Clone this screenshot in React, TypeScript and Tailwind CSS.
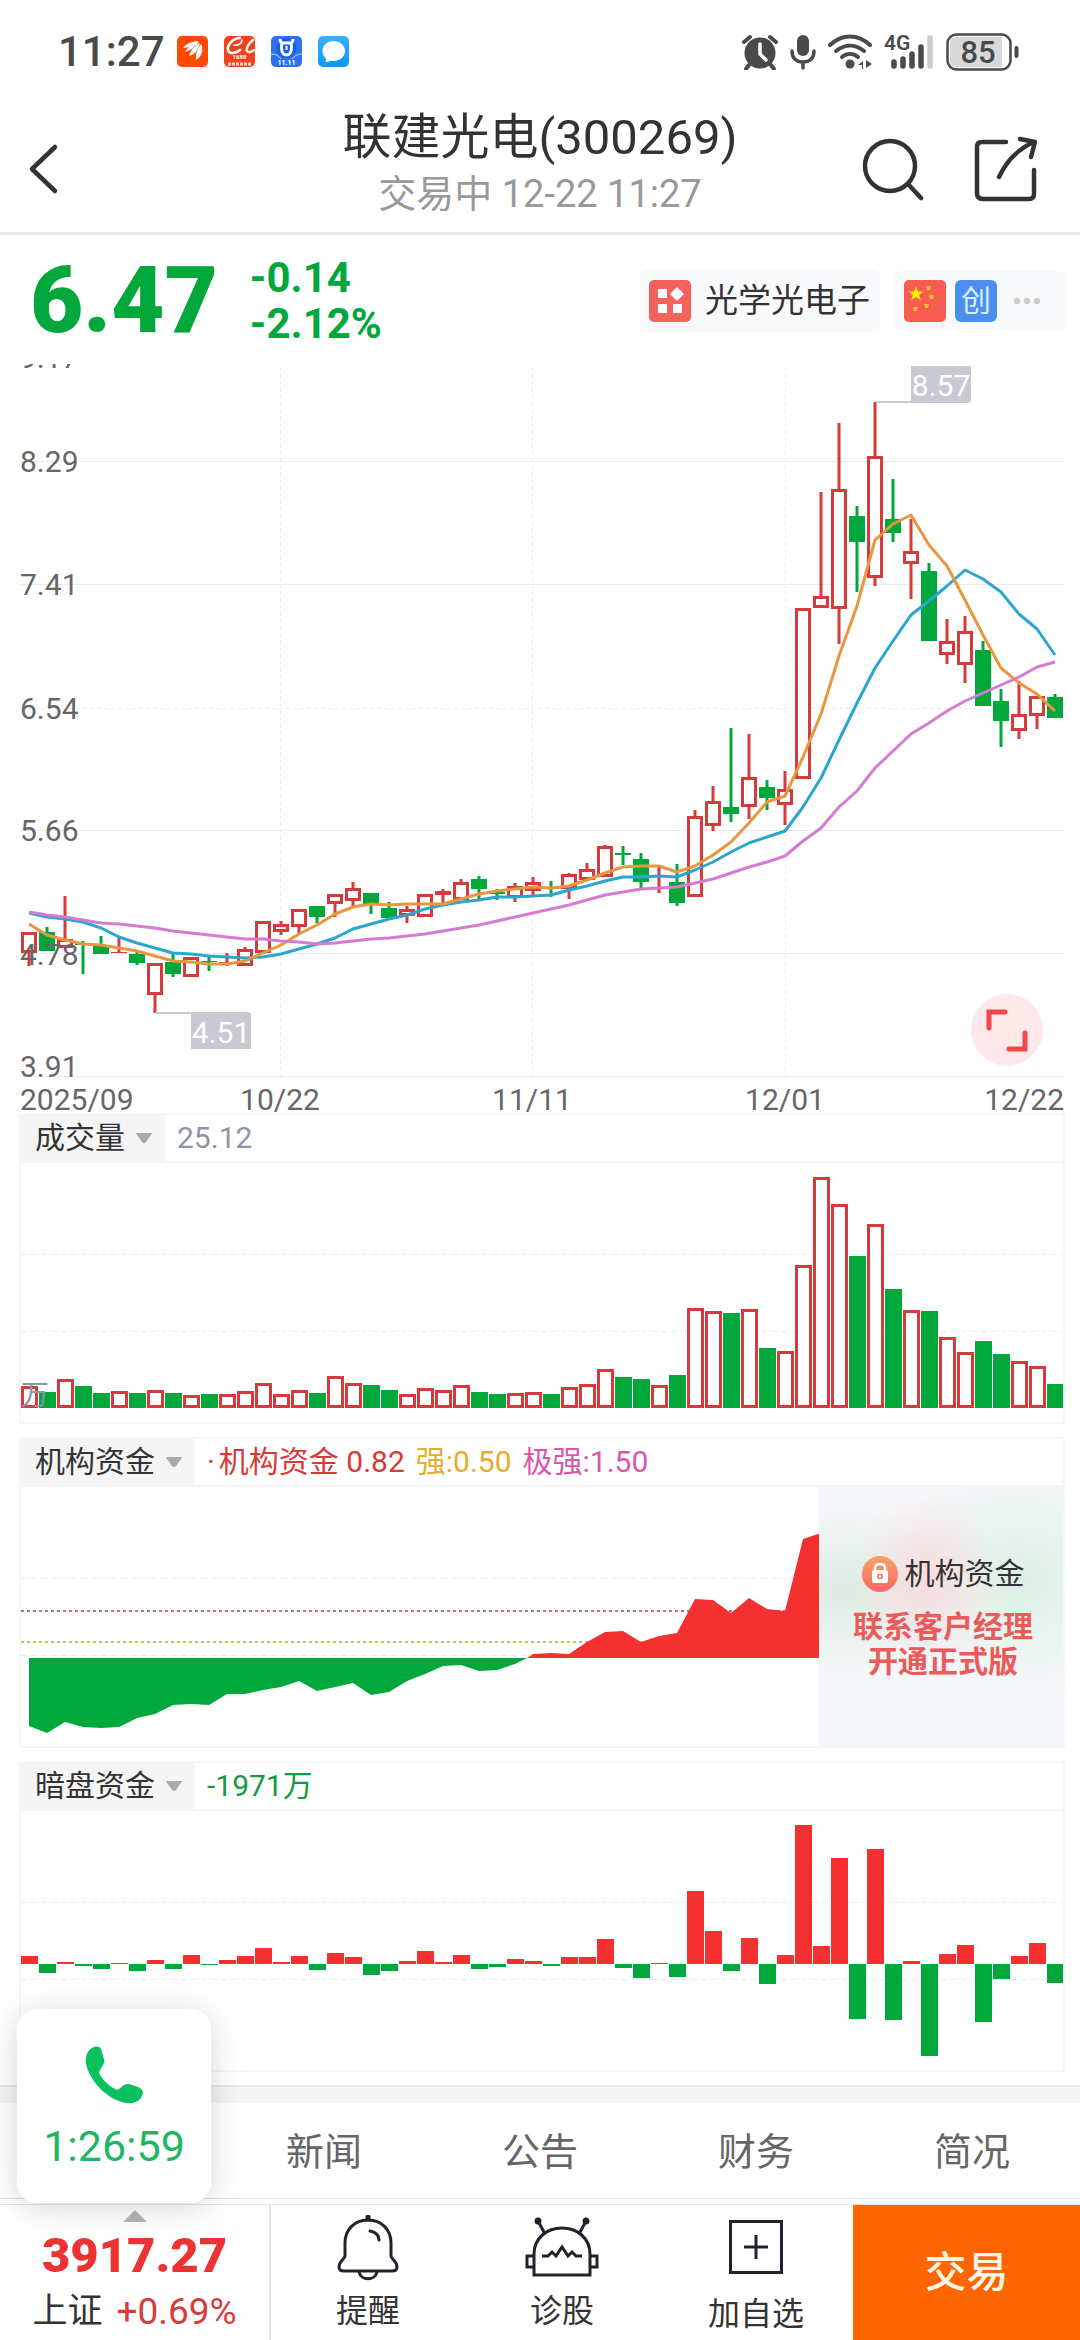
import React from "react";

const RED = "#d63b3b";
const GREEN = "#00a83c";

// [up, high, open/close top, open/close bottom, low] in chart coordinates
type Candle = [number, number, number, number, number];

const candles: Candle[] = [
  [1, 932, 932, 953, 966], [0, 927, 932, 951, 951], [1, 896, 939, 948, 948], [0, 941, 944, 945, 974],
  [0, 936, 946, 954, 954], [1, 937, 952, 953, 953], [0, 952, 954, 963, 965], [1, 963, 963, 995, 1013],
  [0, 954, 962, 974, 977], [1, 957, 957, 977, 977], [0, 957, 961, 962, 971], [1, 953, 962, 963, 966],
  [1, 947, 949, 966, 966], [1, 921, 921, 953, 954], [1, 921, 924, 932, 935], [1, 909, 909, 927, 933],
  [0, 906, 906, 917, 923], [1, 894, 894, 904, 917], [1, 882, 888, 901, 906], [0, 893, 893, 904, 914],
  [0, 902, 908, 918, 918], [1, 906, 909, 916, 923], [1, 894, 894, 917, 917], [1, 889, 891, 895, 904],
  [1, 879, 882, 900, 900], [0, 876, 879, 889, 899], [0, 889, 892, 894, 900], [1, 883, 886, 898, 902],
  [1, 877, 882, 891, 895], [0, 881, 888, 889, 897], [1, 873, 874, 889, 899], [1, 863, 869, 880, 880],
  [1, 845, 846, 877, 877], [0, 846, 853, 855, 865], [0, 853, 859, 882, 888], [1, 866, 887, 888, 893],
  [0, 864, 882, 903, 906], [1, 810, 816, 897, 897], [1, 786, 801, 826, 831], [0, 728, 807, 814, 822],
  [1, 734, 777, 807, 819], [0, 780, 787, 798, 810], [1, 771, 789, 805, 825], [1, 608, 608, 779, 779],
  [1, 492, 596, 608, 608], [1, 423, 489, 609, 644], [0, 506, 516, 542, 592], [1, 402, 456, 578, 586],
  [0, 479, 519, 533, 542], [1, 519, 551, 564, 599], [0, 563, 571, 641, 641], [1, 619, 641, 655, 664],
  [1, 616, 631, 665, 683], [0, 641, 650, 706, 706], [0, 689, 701, 721, 747], [1, 681, 714, 731, 739],
  [1, 696, 696, 716, 729], [0, 694, 697, 718, 718],
];

const ma5 = [
  924, 935, 940, 944, 945, 948, 951, 956, 961, 962, 964, 964, 961, 953, 945, 934, 925, 914, 907, 904,
  905, 904, 904, 904, 899, 894, 891, 889, 887, 888, 886, 880, 873, 867, 866, 866, 872, 866, 855, 842,
  823, 802, 796, 757, 714, 656, 606, 540, 524, 515, 545, 566, 600, 635, 668, 683, 694, 711,
];
const ma10 = [
  913, 917, 919, 922, 928, 937, 943, 948, 953, 954, 956, 957, 958, 957, 954, 949, 944, 938, 929, 924,
  919, 915, 909, 905, 902, 900, 897, 897, 896, 895, 890, 886, 881, 877, 877, 876, 877, 870, 862, 852,
  843, 837, 831, 807, 778, 740, 703, 668, 641, 615, 601, 586, 570, 579, 592, 614, 629, 655,
];
const ma20 = [
  912, 915, 917, 920, 923, 924, 926, 928, 931, 933, 935, 937, 939, 939, 941, 942, 944, 943, 941, 939,
  938, 936, 934, 931, 928, 925, 921, 917, 913, 909, 905, 900, 895, 892, 889, 888, 887, 883, 879, 873,
  867, 862, 856, 841, 828, 807, 791, 768, 751, 734, 723, 711, 701, 693, 685, 677, 667, 662,
];

const volumes = [
  22, 16, 29, 22, 15, 17, 15, 18, 15, 13, 14, 14, 17, 25, 14, 18, 15, 32, 25, 23,
  18, 14, 20, 18, 23, 16, 14, 15, 16, 14, 21, 24, 39, 31, 29, 23, 33, 100, 97, 95,
  99, 60, 57, 143, 231, 204, 152, 184, 119, 98, 97, 71, 56, 67, 54, 47, 42, 24,
];

const orgFunds = [
  -68, -75, -64, -69, -70, -69, -60, -56, -47, -46, -47, -36, -36, -32, -29, -23, -33, -29, -25, -37,
  -34, -23, -16, -8, -7, -13, -12, -6, 4, 5, 4, 16, 26, 27, 16, 22, 25, 59, 58, 45,
  60, 49, 47, 119, 125,
];

const darkFunds = [
  8, -9, 2, -2, -5, 1, -7, 4, -5, 9, -1, 4, 8, 16, 2, 8, -6, 11, 7, -11,
  -7, 3, 13, 2, 9, -5, -3, 5, 3, -2, 7, 7, 25, -4, -14, 1, -13, 73, 33, -7,
  26, -20, 9, 139, 18, 106, -55, 115, -56, 3, -92, 10, 19, -58, -15, 8, 21, -19,
];

const xAt = (i: number) => 29 + i * 18;
const toPoints = (values: number[]) => values.map((v, i) => `${xAt(i)},${v}`).join(" ");

const StatusBar = () => (
  <div className="flex h-[103px] items-center justify-between pl-[58px] pr-[60px] text-[#4a4a4a]">
    <div className="flex items-center gap-4">
      <span className="-mr-1 text-[42px] font-medium leading-none">11:27</span>
      {/* Feather app */}
      <svg width="31" height="31" viewBox="0 0 31 31">
        <rect width="31" height="31" rx="5" fill="#ff4800" />
        <g fill="#fff">
          <path d="M6 12C10 7 16 5 22 5c-2 2-5 3-7 5-3 1-6 2-9 2z" />
          <path d="M8 16c3-5 8-9 14-10-2 3-5 4-7 7-2 1-4 2-7 3z" />
          <path d="M12 20c2-6 6-11 11-13-1 4-3 6-4 9-2 2-4 3-7 4z" />
          <path d="M19 24c-1-6 2-12 5-16 3 6 1 12-5 16z" />
        </g>
      </svg>
      {/* 1688 app */}
      <svg width="31" height="31" viewBox="0 0 31 31">
        <rect width="31" height="31" rx="5" fill="#f2431a" />
        <g fill="none" stroke="#fff" strokeLinecap="round">
          <path d="M16 2C9 2 3 9 4 14c1 5 9 3 12 0" strokeWidth="2.6" />
          <path d="M10 9c4 1 8-2 8-5" strokeWidth="1.6" />
          <path d="M29 4c-4 3-7 8-6 11 1 2 5 1 7-1" strokeWidth="2.4" />
        </g>
        <text x="15.5" y="23" fontSize="6" fontWeight="700" textAnchor="middle" fill="#fff">1688</text>
        <path d="M4 28h23" stroke="#ffd9cc" strokeWidth="3" strokeDasharray="3 1" />
      </svg>
      {/* 11.11 app */}
      <svg width="31" height="31" viewBox="0 0 31 31">
        <rect width="31" height="31" rx="5" fill="#2f6ff0" />
        <circle cx="15.5" cy="12" r="10" fill="#1760e0" />
        <path d="M0 18c5 0 8 2 10 5M31 18c-5 0-8 2-10 5" stroke="#bcd4ff" fill="none" />
        <path d="M9 3c0 3 1 4 3 4h7c2 0 3-1 3-4M11 7c-1 4-1 12 4.500 12S21 11 20 7" fill="none" stroke="#fff" strokeWidth="3" />
        <path d="M15.500 10v4" stroke="#fff" strokeWidth="2" />
        <text x="15.5" y="29" fontSize="7" fontWeight="700" textAnchor="middle" fill="#fff">11.11</text>
      </svg>
      {/* Messages app */}
      <svg width="31" height="31" viewBox="0 0 31 31">
        <defs>
          <linearGradient id="msg" x1="0" y1="0" x2="0" y2="1">
            <stop offset="0" stopColor="#35b1ff" />
            <stop offset="1" stopColor="#0b97fb" />
          </linearGradient>
        </defs>
        <rect width="31" height="31" rx="5" fill="url(#msg)" />
        <path d="M15.500 5C9 5 4.500 9.500 4.500 15c0 3.500 1.500 6 3.500 7.500L7.500 26c2 0 4-.5 5.500-1.300C21 26 27 21 27 15c0-5.500-5-10-11.500-10z" fill="#fff" />
      </svg>
    </div>
    <div className="flex items-center gap-3">
      {/* Alarm */}
      <svg width="36" height="36" viewBox="0 0 36 36">
        <circle cx="18" cy="19" r="15.500" fill="#4a4a4a" />
        <path d="M2 8l6-5M34 8l-6-5M7 31l-3 4M29 31l3 4" stroke="#4a4a4a" strokeWidth="4" strokeLinecap="round" />
        <path d="M18 10v10l6 6" fill="none" stroke="#fff" strokeWidth="3.500" strokeLinecap="round" strokeLinejoin="round" />
      </svg>
      {/* Microphone */}
      <svg width="26" height="36" viewBox="0 0 26 36">
        <rect x="7" y="1" width="12" height="21" rx="6" fill="#4a4a4a" />
        <path d="M2 17c0 8 5 11 11 11s11-3 11-11M13 28v6" fill="none" stroke="#4a4a4a" strokeWidth="3.500" strokeLinecap="round" />
      </svg>
      {/* Wifi */}
      <svg width="44" height="36" viewBox="0 0 44 36">
        <g fill="none" stroke="#4a4a4a" strokeWidth="4" strokeLinecap="round">
          <path d="M2 11C14-.5 30-.5 42 11" />
          <path d="M8 17c9-7 19-7 28 0" />
          <path d="M14 23c5-4 11-4 16 0" />
        </g>
        <circle cx="22" cy="30" r="4.500" fill="#4a4a4a" />
        <path d="M30 31l5-4v8h-1v-4zM38 26v8l6-4z" fill="#4a4a4a" />
      </svg>
      {/* Mobile signal */}
      <svg width="50" height="36" viewBox="0 0 50 36" className="overflow-visible">
        <text x="0" y="16" fontSize="21" fontWeight="600" fill="#4a4a4a">4G</text>
        <g strokeWidth="5.500" strokeLinecap="round" stroke="#4a4a4a">
          <path d="M10 28v4M19 25v7M28 20v12M37 13v19" />
          <path d="M46 4v28" stroke="#cacaca" />
        </g>
      </svg>
      {/* Battery */}
      <svg width="74" height="38" viewBox="0 0 74 38">
        <rect x="1.500" y="1.500" width="63" height="35" rx="9" fill="#fff" stroke="#4a4a4a" strokeWidth="2.500" />
        <path d="M10 4h46v30H10q-6 0-6-6V10q0-6 6-6z" fill="#d9d9d9" />
        <path d="M70.500 15v8" stroke="#4a4a4a" strokeWidth="4" strokeLinecap="round" />
        <text x="32" y="30" fontSize="31" fontWeight="500" textAnchor="middle" fill="#4a4a4a">85</text>
      </svg>
    </div>
  </div>
);

const Header = () => (
  <header className="grid h-[132px] grid-cols-[1fr_auto_1fr] items-center border-b-[3px] border-[#e7e7e7]">
    <button aria-label="返回" className="w-fit pl-[28px] pt-[2px]">
      <svg width="32" height="52" viewBox="0 0 32 52" fill="none" stroke="#333" strokeWidth="4.500" strokeLinecap="round" strokeLinejoin="round">
        <path d="M27 4L4 26l23 22" />
      </svg>
    </button>
    <div className="pb-1 text-center">
      <h1 className="text-[49px] leading-[56px] text-[#333]">联建光电(300269)</h1>
      <p className="text-[38px] leading-[56px] text-[#999]">交易中 12-22 11:27</p>
    </div>
    <div className="flex items-center justify-end gap-[50px] pr-[42px] pt-[2px]">
      <button aria-label="搜索">
        <svg width="62" height="64" viewBox="0 0 62 64" fill="none" stroke="#333" strokeWidth="4.500" strokeLinecap="round">
          <circle cx="28" cy="29" r="25" />
          <path d="M46 47l13 14" />
        </svg>
      </button>
      <button aria-label="分享">
        <svg width="64" height="66" viewBox="0 0 64 66" fill="none" stroke="#333" strokeWidth="4.500" strokeLinecap="round" strokeLinejoin="round">
          <path d="M32 6H8q-5 0-5 5v46q0 6 6 6h46q5 0 5-5V34" />
          <path d="M25 41C32 26 44 13 60 6" />
          <path d="M46 3l15 3-4 15" />
        </svg>
      </button>
    </div>
  </header>
);

const PriceRow = () => (
  <section className="flex h-[129px] items-center justify-between pl-[30px] pr-[15px] pt-[2px]">
    <div className="flex items-center gap-8 text-[#00a83c]">
      <span className="text-[92px] font-black leading-none">6.47</span>
      <div className="text-[42px] font-bold leading-[46px]">
        <p>-0.14</p>
        <p>-2.12%</p>
      </div>
    </div>
    <div className="flex items-center gap-[15px]">
      <a href="#sector" className="flex h-[62px] items-center gap-[14px] rounded-md bg-[#f8f9fb] pl-[9px] pr-[10px] text-[33px] text-[#333]">
        <svg width="42" height="42" viewBox="0 0 42 42">
          <rect width="42" height="42" rx="5" fill="#f5625d" />
          <g fill="#fff">
            <rect x="9" y="9" width="9" height="9" />
            <rect x="9" y="24" width="9" height="9" />
            <rect x="24" y="24" width="9" height="9" />
            <path d="M28 7l7 7-7 7-7-7z" />
          </g>
        </svg>
        光学光电子
      </a>
      <button aria-label="更多标签" className="flex h-[60px] items-center gap-[9px] rounded-md bg-[#f8f9fb] pl-[9px] pr-[24px]">
        <svg width="42" height="42" viewBox="0 0 42 42">
          <rect width="42" height="42" rx="5" fill="#f85c50" />
          <path d="M12 6.500l2 5h5.500l-4.400 3.400 1.700 5.300L12 17l-4.800 3.200 1.700-5.300L4.500 11.500H10z" fill="#ffee00" />
          <g fill="#f9c02e">
            <path d="M22 6l5 0-1 4h-3zM25 15l5 0-1 4h-3zM20 24l5 0-1 4h-3zM9 27h5l-1 4h-3z" />
          </g>
        </svg>
        <span className="flex h-[42px] w-[42px] items-center justify-center rounded-md bg-[#4a8ef0] text-[30px] leading-none text-[#d9efff]">创</span>
        <svg width="28" height="8" viewBox="0 0 28 8" className="ml-[7px]" fill="#ccc">
          <circle cx="4" cy="4" r="3.200" />
          <circle cx="14" cy="4" r="3.200" />
          <circle cx="24" cy="4" r="3.200" />
        </svg>
      </button>
    </div>
  </section>
);

const PriceChart = () => (
  <section className="relative">
    <svg viewBox="0 364 1080 749" className="block w-full">
      {/* Grid */}
      <g stroke="#ececec" strokeWidth="1">
        {[461.5, 584.5, 830.5, 953.5, 1076.5].map((y) => (
          <path key={y} d={`M20 ${y}H1064`} />
        ))}
        <path d="M20 708.500H1064" strokeDasharray="4 3" />
        {[280.5, 532.5, 785.5].map((x) => (
          <path key={x} d={`M${x} 367V1076`} strokeDasharray="4 3" />
        ))}
      </g>
      {candles.map(([up, high, top, bottom, low], i) => {
        const x = xAt(i);
        const color = up ? RED : GREEN;
        return (
          <g key={i}>
            {high < top && <rect x={x - 1.5} y={high} width="3" height={top - high} fill={color} />}
            {low > bottom && <rect x={x - 1.5} y={bottom} width="3" height={low - bottom} fill={color} />}
            {up && bottom - top > 5 ? (
              <rect x={x - 6.5} y={top + 1.5} width="13" height={bottom - top - 3} fill="#fff" stroke={color} strokeWidth="3" />
            ) : (
              <rect x={x - 8} y={top} width="16" height={bottom - top} fill={color} />
            )}
          </g>
        );
      })}
      <g fill="none" strokeWidth="3" strokeLinejoin="round">
        <polyline points={toPoints(ma10)} stroke="#2ba6d0" />
        <polyline points={toPoints(ma5)} stroke="#e9963e" />
        <polyline points={toPoints(ma20)} stroke="#d67bd2" />
      </g>
      {/* High and low marks */}
      <g fill="#c9c9d2">
        <rect x="876" y="401" width="93" height="2" />
        <rect x="911" y="366" width="60" height="36" />
        <rect x="155" y="1012" width="94" height="2" />
        <rect x="191" y="1013" width="60" height="36" />
      </g>
      <g fill="#fff" fontSize="30" textAnchor="middle">
        <text x="941" y="396">8.57</text>
        <text x="221" y="1043">4.51</text>
      </g>
      <g fill="#666" fontSize="30">
        <text x="20" y="368">9.17</text>
        <text x="20" y="472">8.29</text>
        <text x="20" y="595">7.41</text>
        <text x="20" y="719">6.54</text>
        <text x="20" y="841">5.66</text>
        <text x="20" y="965">4.78</text>
        <text x="20" y="1077">3.91</text>
        <text x="20" y="1110">2025/09</text>
        <text x="280" y="1110" textAnchor="middle">10/22</text>
        <text x="532" y="1110" textAnchor="middle">11/11</text>
        <text x="785" y="1110" textAnchor="middle">12/01</text>
        <text x="1064" y="1110" textAnchor="end">12/22</text>
      </g>
    </svg>
    <button aria-label="全屏" className="absolute bottom-[47px] right-[37px] rounded-full bg-[#fee8e9]">
      <svg width="72" height="72" viewBox="0 0 72 72" fill="none" stroke="#f2474d" strokeWidth="5" strokeLinecap="round">
        <path d="M18 34V18h16M54 39v16H38" />
      </svg>
    </button>
  </section>
);

type PanelProps = {
  title: string;
  value: React.ReactNode;
  overlay?: React.ReactNode;
  children: React.ReactNode;
};

const Panel = ({ title, value, overlay, children }: PanelProps) => (
  <section className="mb-[13px] ml-[19px] mr-[15px] border-2 border-[#f5f6f7]">
    <div className="flex h-12 items-stretch border-b-2 border-[#f3f5f6] text-[30px] leading-[46px]">
      <button className="flex items-center gap-[11px] bg-[#f5f5f5] pl-[14px] pr-[13px] text-[#333]">
        {title}
        <svg width="16" height="10" viewBox="0 0 16 10" fill="#a9abb3">
          <path d="M1 0h14q2 0 0 2L10 9q-2 2-4 0L1 2q-2-2 0-2z" />
        </svg>
      </button>
      <div className="flex gap-[11px] pl-3">{value}</div>
    </div>
    <div className="relative">
      <svg viewBox="21 0 1042 259" className="block w-full">
        <path d="M21 91.500H1063M21 168.500H1063" stroke="#ececec" strokeDasharray="6 4" />
        {children}
      </svg>
      {overlay}
    </div>
  </section>
);

const LockedCard = () => (
  <a
    href="#upgrade"
    className="absolute inset-y-0 right-0 flex w-[23.4%] flex-col items-center overflow-hidden bg-[#f6f7fa] bg-[radial-gradient(ellipse_at_44%_36%,#f8dcdf_0%,transparent_38%),radial-gradient(ellipse_at_82%_36%,#dcf0e5_0%,transparent_48%),radial-gradient(ellipse_at_10%_40%,#dcece3_0%,transparent_40%)] pl-1 pt-[67px]"
  >
    <span className="flex items-center gap-[7px] text-[30px] leading-[40px] text-[#333]">
      <svg width="36" height="36" viewBox="0 0 36 36">
        <defs>
          <linearGradient id="lock" x1="0" y1="0" x2="0" y2="1">
            <stop offset="0" stopColor="#f8a562" />
            <stop offset="1" stopColor="#fb666b" />
          </linearGradient>
        </defs>
        <circle cx="18" cy="18" r="18" fill="url(#lock)" />
        <path d="M13 15v-3q0-4 5-4t5 4v3" fill="none" stroke="#fff" strokeWidth="2.500" />
        <rect x="10" y="14" width="16" height="13" rx="2" fill="#fff" />
        <circle cx="18" cy="20.500" r="2.200" fill="none" stroke="#f9806a" strokeWidth="1.800" />
      </svg>
      机构资金
    </span>
    <span className="mt-[15px] text-center text-[30px] font-bold leading-[35px] text-[#e95c5b]">
      联系客户经理
      <br />
      开通正式版
    </span>
  </a>
);

const VolumePanel = () => (
  <Panel title="成交量" value={<span className="text-[#8a97a6]">25.12</span>}>
    {volumes.map((v, i) =>
      candles[i][0] ? (
        <rect key={i} x={xAt(i) - 6.5} y={246.5 - v} width="14" height={v - 3} fill="#fff" stroke={RED} strokeWidth="3" />
      ) : (
        <rect key={i} x={xAt(i) - 8} y={245 - v} width="17" height={v} fill={GREEN} />
      )
    )}
    <text x="21" y="242" fontSize="28" fill="#8a97a6">万</text>
  </Panel>
);

const OrgFundPanel = () => {
  const green = orgFunds.slice(0, 28).map((v, i) => `${xAt(i)},${171 - v}`).join(" ");
  const red = orgFunds.slice(28).map((v, i) => `${xAt(i + 28)},${171 - v}`).join(" ");
  return (
    <Panel
      title="机构资金"
      value={
        <>
          <span className="flex gap-1 text-[#d63a36]">
            <span>·</span>
            机构资金 0.82
          </span>
          <span className="text-[#e5ad2c]">强:0.50</span>
          <span className="text-[#d957a8]">极强:1.50</span>
        </>
      }
      overlay={<LockedCard />}
    >
      <path d="M21 124H819" stroke="#c964a4" strokeWidth="2" strokeDasharray="3 3" />
      <path d="M21 155H819" stroke="#cdb768" strokeWidth="2" strokeDasharray="3 3" />
      <polygon points={`29,171 ${green} 527,171`} fill={GREEN} />
      <polygon points={`527,171 ${red} 821,171`} fill="#f43030" />
    </Panel>
  );
};

const DarkFundPanel = () => (
  <Panel title="暗盘资金" value={<span className="text-[#149a45]">-1971万</span>}>
    {darkFunds.map((v, i) => (
      <rect
        key={i}
        x={xAt(i) - 8}
        y={v > 0 ? 153 - v : 153}
        width="17"
        height={Math.abs(v)}
        fill={v > 0 ? "#f43030" : GREEN}
      />
    ))}
  </Panel>
);

const Tabs = () => (
  <nav className="grid h-[96px] grid-cols-4 items-center border-b border-[#e4e4e4] pl-[20%] pt-1 text-center text-[38px] text-[#666]">
    <a href="#news">新闻</a>
    <a href="#notice">公告</a>
    <a href="#finance">财务</a>
    <a href="#profile">简况</a>
  </nav>
);

const BottomBar = () => (
  <footer className="mt-[5px] grid h-[136px] grid-cols-[271fr_194fr_194fr_194fr_227fr] border-t border-[#e4e4e4] text-[32px] leading-[40px] text-[#333]">
    <a href="#index" className="flex flex-col items-center border-r-2 border-[#e4e4e4] pt-[5px]">
      <svg width="24" height="12" viewBox="0 0 24 12" fill="#b5b5b5">
        <path d="M12 0l12 12H0z" />
      </svg>
      <strong className="mt-[6px] text-[49px] font-black leading-[56px] text-[#eb3333]">3917.27</strong>
      <span className="mt-2 flex items-center gap-[14px] text-[35px]">
        上证 <span className="text-[37px] text-[#d83c3c]">+0.69%</span>
      </span>
    </a>
    <button className="flex flex-col items-center gap-[10px] pt-[10px]">
      <svg width="62" height="66" viewBox="0 0 62 66" fill="none" stroke="#22222c" strokeWidth="3" strokeLinejoin="round" strokeLinecap="round">
        <path d="M31 5C17 5 8 15 8 28v13c0 3-6 5-6 11 0 3 2 4 5 4h48c3 0 5-1 5-4 0-6-6-8-6-11V28C54 15 45 5 31 5z" />
        <path d="M33 16c5 1 9 4 9 9M22 57c2 9 16 9 18 0" />
        <path d="M31 2v2" strokeWidth="5" />
      </svg>
      <span>提醒</span>
    </button>
    <button className="flex flex-col items-center gap-[10px] pt-[10px]">
      <svg width="74" height="66" viewBox="0 0 74 66" fill="none" stroke="#22222c" strokeWidth="3">
        <path d="M9 60V39C9 23 22 13 37 13s28 10 28 26v21z" />
        <path d="M9 41H2v11h7M65 41h7v11h-7M20 19L13 6M54 19l7-13" />
        <path d="M17 41h6l4-4 4 4 6-9 6 9 4-4 4 4h6" />
        <circle cx="13" cy="6" r="2" fill="#22222c" />
        <circle cx="61" cy="6" r="2" fill="#22222c" />
      </svg>
      <span>诊股</span>
    </button>
    <button className="flex flex-col items-center gap-5 pt-[15px]">
      <svg width="54" height="54" viewBox="0 0 54 54" fill="none" stroke="#22222c" strokeWidth="3">
        <path d="M1.500 1.500h51v51h-51zM27 15v24M15 27h24" />
      </svg>
      <span>加自选</span>
    </button>
    <button className="bg-[#ff6600] text-[42px] font-medium text-[#fff6e6]">交易</button>
  </footer>
);

const CallCard = () => (
  <button className="absolute bottom-[137px] left-[17px] flex h-[194px] w-[194px] flex-col items-center rounded-[20px] bg-white pt-[37px] shadow-[0_4px_32px_rgba(0,0,0,0.16)]">
    <svg width="58" height="58" viewBox="0 0 58 58" fill="#0ac160">
      <path d="M7 2C11 0 14 0 16 3l3 10c1 3 0 4-1 6l-3 5c-1 2-1 3 0 5 5 7 9 11 15 14 1 1 3 1 4 0l5-4c2-1 3-1 5-1l9 3c5 2 6 6 4 9-3 6-9 8-16 7C24 54 6 38 1 18 0 11 2 5 7 2z" />
    </svg>
    <span className="mt-[14px] text-[43px] leading-[56px] text-[#1fb663]">1:26:59</span>
  </button>
);

const App = () => {
  return (
    <main className="relative min-h-screen overflow-hidden bg-white font-['Roboto','Noto_Sans_CJK_SC',sans-serif]">
      <StatusBar />
      <Header />
      <PriceRow />
      <PriceChart />
      <VolumePanel />
      <OrgFundPanel />
      <DarkFundPanel />
      <div className="h-[18px] border-t-2 border-[#e8eaed] bg-[#f2f4f7]" />
      <Tabs />
      <BottomBar />
      <CallCard />
    </main>
  );
};

export default App;
